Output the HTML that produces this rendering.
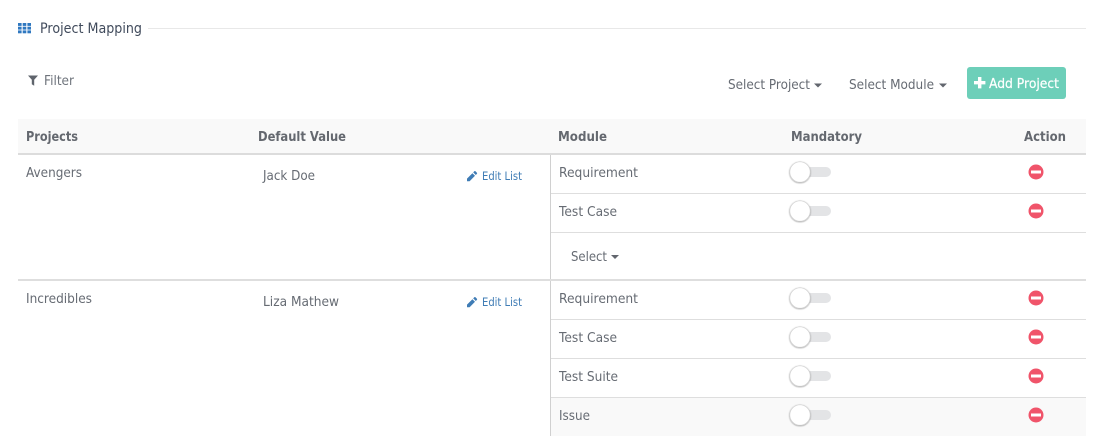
<!DOCTYPE html>
<html><head><meta charset="utf-8"><style>
html,body{margin:0;padding:0;background:#fff;width:1098px;height:445px;overflow:hidden}
svg{display:block}
text{font-family:"DejaVu Sans","Liberation Sans",sans-serif;font-size:13.4px;fill:#666b73}
.b{font-weight:700;fill:#64686f;font-size:13.2px}
</style></head><body>
<svg width="1098" height="445" viewBox="0 0 1098 445" xmlns="http://www.w3.org/2000/svg">
<defs>
<filter id="s" x="-30%" y="-30%" width="160%" height="160%"><feDropShadow dx="0" dy="0.5" stdDeviation="0.8" flood-color="#000" flood-opacity=".45"/></filter>
<g id="t"><rect x="800" y="-5" width="31" height="10" rx="5" fill="#e3e4e6"/><circle cx="800" cy="0" r="10.2" fill="#fff" stroke="#d2d2d2" stroke-width=".7" filter="url(#s)"/></g>
<g id="d"><circle cx="1036" cy="0" r="7.5" fill="#f0546a"/><rect x="1031" y="-1.5" width="10" height="3" fill="#fff"/></g>
<g id="p"><path d="M467 5.2v-2.6l5.4-5.4 2.6 2.6-5.4 5.4zM473.2-3.6l1.1-1.1q.6-.6 1.2 0l1.4 1.4q.6.6 0 1.2l-1.1 1.1z" fill="#3f7cb5"/></g>
</defs>
<rect x="148" y="28" width="938" height="1" fill="#e8e8e8"/>
<g fill="#2f78c0"><rect x="18" y="23" width="3.6" height="2.9"/><rect x="22.7" y="23" width="3.6" height="2.9"/><rect x="27.4" y="23" width="3.6" height="2.9"/><rect x="18" y="26.7" width="3.6" height="2.9"/><rect x="22.7" y="26.7" width="3.6" height="2.9"/><rect x="27.4" y="26.7" width="3.6" height="2.9"/><rect x="18" y="30.4" width="3.6" height="2.9"/><rect x="22.7" y="30.4" width="3.6" height="2.9"/><rect x="27.4" y="30.4" width="3.6" height="2.9"/></g>
<text x="40" y="33" textLength="102" lengthAdjust="spacingAndGlyphs" style="fill:#414b5c;font-size:13.8px">Project Mapping</text>
<path d="M28 75.5h10l-3.8 4.3v6l-2.4-1.6v-4.4z" fill="#5f646c"/>
<text x="44" y="85" textLength="30" lengthAdjust="spacingAndGlyphs" style="fill:#6f747c">Filter</text>
<text x="728" y="89" textLength="82" lengthAdjust="spacingAndGlyphs">Select Project</text>
<path d="M814 83.5h8l-4 4z" fill="#62666e"/>
<text x="849" y="89" textLength="85" lengthAdjust="spacingAndGlyphs">Select Module</text>
<path d="M939 83.5h8l-4 4z" fill="#62666e"/>
<rect x="967" y="67" width="99" height="32" rx="3" fill="#6dcfb9"/>
<path d="M978 78h3.4v4h4v3.4h-4v4H978v-4h-4V82h4z" transform="translate(0,-1)" fill="#fff"/>
<text x="989" y="88" textLength="70" lengthAdjust="spacingAndGlyphs" style="fill:#fff;stroke:#fff;stroke-width:.2">Add Project</text>
<rect x="18" y="119" width="1068" height="34" fill="#f9f9f9"/>
<rect x="18" y="153" width="1068" height="2" fill="#dcdcdc"/>
<text class="b" x="26" y="141" textLength="52" lengthAdjust="spacingAndGlyphs">Projects</text>
<text class="b" x="258" y="141" textLength="88" lengthAdjust="spacingAndGlyphs">Default Value</text>
<text class="b" x="558" y="141" textLength="49" lengthAdjust="spacingAndGlyphs">Module</text>
<text class="b" x="791" y="141" textLength="71" lengthAdjust="spacingAndGlyphs">Mandatory</text>
<text class="b" x="1024" y="141" textLength="42" lengthAdjust="spacingAndGlyphs">Action</text>
<rect x="551" y="398" width="535" height="38" fill="#f9f9f9"/>
<rect x="550" y="155" width="1" height="281" fill="#d0d0d0"/>
<g fill="#dedede"><rect x="551" y="193" width="535" height="1"/><rect x="551" y="232" width="535" height="1"/><rect x="18" y="279" width="1068" height="2"/><rect x="551" y="319" width="535" height="1"/><rect x="551" y="358" width="535" height="1"/><rect x="551" y="397" width="535" height="1"/></g>
<text x="26" y="177" textLength="56" lengthAdjust="spacingAndGlyphs">Avengers</text>
<text x="263" y="180" textLength="52" lengthAdjust="spacingAndGlyphs">Jack Doe</text>
<use href="#p" y="176"/>
<text x="482" y="180" textLength="40" lengthAdjust="spacingAndGlyphs" style="font-size:11.6px;fill:#3f7cb5">Edit List</text>
<text x="559" y="177" textLength="79" lengthAdjust="spacingAndGlyphs">Requirement</text>
<text x="559" y="216" textLength="58" lengthAdjust="spacingAndGlyphs">Test Case</text>
<text x="571" y="261" textLength="36" lengthAdjust="spacingAndGlyphs">Select</text>
<path d="M611 255h8l-4 4z" fill="#62666e"/>
<text x="26" y="303" textLength="66" lengthAdjust="spacingAndGlyphs">Incredibles</text>
<text x="263" y="306" textLength="76" lengthAdjust="spacingAndGlyphs">Liza Mathew</text>
<use href="#p" y="302"/>
<text x="482" y="306" textLength="40" lengthAdjust="spacingAndGlyphs" style="font-size:11.6px;fill:#3f7cb5">Edit List</text>
<text x="559" y="303" textLength="79" lengthAdjust="spacingAndGlyphs">Requirement</text>
<text x="559" y="342" textLength="58" lengthAdjust="spacingAndGlyphs">Test Case</text>
<text x="559" y="381" textLength="59" lengthAdjust="spacingAndGlyphs">Test Suite</text>
<text x="559" y="420" textLength="31" lengthAdjust="spacingAndGlyphs">Issue</text>
<use href="#t" y="172"/><use href="#d" y="172"/>
<use href="#t" y="211"/><use href="#d" y="211"/>
<use href="#t" y="298"/><use href="#d" y="298"/>
<use href="#t" y="337"/><use href="#d" y="337"/>
<use href="#t" y="376"/><use href="#d" y="376"/>
<use href="#t" y="415"/><use href="#d" y="415"/>
</svg>
</body></html>
